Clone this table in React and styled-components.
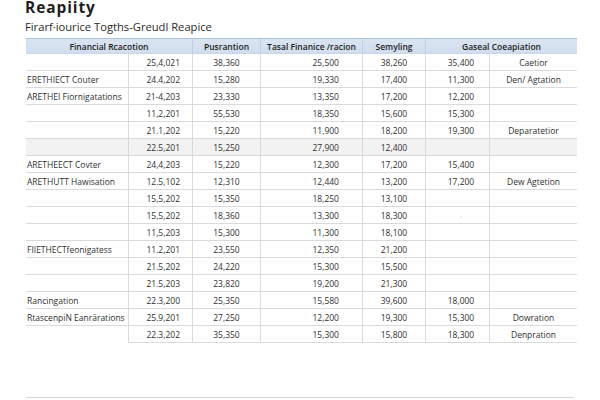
import React from "react";
import styled, { createGlobalStyle } from "styled-components";

const Global = createGlobalStyle`
  html, body { margin: 0; padding: 0; background: #ffffff; }
  body { font-family: "Open Sans", "Noto Sans", sans-serif; color: #2f2f2f; }
`;

const COLS = "102px 64px 68px 102px 63px 64px 88px";

const Page = styled.div`
  width: 600px;
  height: 400px;
  box-sizing: border-box;
  padding-left: 26px;
  overflow: hidden;
`;

const Title = styled.h1`
  margin: 0 0 0 -1px;
  font-size: 15.5px;
  line-height: 14px;
  letter-spacing: 0.9px;
  font-weight: 700;
  color: #1e1e1e;
`;

const Subtitle = styled.h2`
  margin: 6px 0 0 -1px;
  font-size: 11.2px;
  line-height: 14px;
  font-weight: 400;
  color: #2a2a2a;
`;

const Table = styled.div`
  width: 551px;
  margin-top: 4px;
  font-size: 8.5px;
`;

const HeaderRow = styled.div`
  display: grid;
  grid-template-columns: ${COLS};
  height: 16px;
  box-sizing: border-box;
  border-top: 1px solid #aec2dc;
  border-bottom: 1px solid #c9d6e7;
  background: linear-gradient(#d9e4f1, #d0ddee);
`;

const HeadCell = styled.div`
  grid-column: span ${(p) => p.$span || 1};
  display: flex;
  align-items: center;
  justify-content: center;
  font-weight: 600;
  color: #1c1c1c;
  white-space: nowrap;
  border-left: ${(p) => (p.$first ? "none" : "1px solid #bfcfe3")};
`;

const Row = styled.div`
  display: grid;
  grid-template-columns: ${COLS};
  height: 17px;
  background: ${(p) => (p.$shaded ? "#f2f2f2" : "transparent")};
`;

const Cell = styled.div`
  display: flex;
  align-items: center;
  box-sizing: border-box;
  justify-content: ${(p) =>
    p.$align === "right" ? "flex-end" : p.$align === "left" ? "flex-start" : "center"};
  padding-left: ${(p) => p.$pl || 0}px;
  padding-right: ${(p) => p.$pr || 0}px;
  border-bottom: ${(p) => (p.$noBottom ? "1px solid transparent" : "1px solid #dadada")};
  border-left: ${(p) => (p.$first ? "none" : "1px solid #dadada")};
  white-space: nowrap;
  color: #303030;
`;

const Faint = styled.span`
  color: ${(p) => (p.$strong ? "#b0b0b0" : "#dedede")};
  font-size: 8px;
`;

const BottomRule = styled.div`
  width: 548px;
  margin-top: 54px;
  border-top: 1px solid #d6d6d6;
`;

const rows = [
  ["", "25,4,021", "38,360", "25,500", "38,260", "35,400", "Caetior"],
  ["ERETHIECT Couter", "24.4,202", "15,280", "19,330", "17,400", "11,300", "Den/ Agtation"],
  ["ARETHEI Fiornigatations", "21-4,203", "23,330", "13,350", "17,200", "12,200", ""],
  ["", "11,2,201", "55,530", "18,350", "15,600", "15,300", ""],
  ["", "21.1,202", "15,220", "11,900", "18,200", "19,300", "Deparatetior"],
  ["", "22.5,201", "15,250", "27,900", "12,400", "", "", true],
  ["ARETHEECT Covter", "24,4,203", "15,220", "12,300", "17,200", "15,400", ""],
  ["ARETHUTT Hawisation", "12.5,102", "12,310", "12,440", "13,200", "17,200", "Dew Agtetion"],
  ["", "15,5,202", "15,350", "18,250", "13,100", "", ""],
  ["", "15,5,202", "18,360", "13,300", "18,300", "dot", ""],
  ["", "11,5,203", "15,300", "11,300", "18,100", "", ""],
  ["FIIETHECTfeonigatess", "11.2,201", "23,550", "12,350", "21,200", "", ""],
  ["", "21.5,202", "24,220", "15,300", "15,500", "faint", ""],
  ["", "21.5,203", "23,820", "19,200", "21,300", "faint", ""],
  ["Rancingation", "22.3,200", "25,350", "15,580", "39,600", "18,000", ""],
  ["RtascenpiN Eanrärations", "25.9,201", "27,250", "12,200", "19,300", "15,300", "Dowration"],
  ["", "22.3,202", "35,350", "15,300", "15,800", "18,300", "Denpration"],
];

const renderC6 = (v) => {
  if (v === "dot") return <Faint $strong>·</Faint>;
  if (v === "faint") return <Faint>·</Faint>;
  return v;
};

export default function App() {
  return (
    <>
      <Global />
      <Page>
        <Title>Reapiity</Title>
        <Subtitle>Firarf·iourice Togths-Greudl Reapice</Subtitle>
        <Table>
          <HeaderRow>
            <HeadCell $span={2} $first>Financial Rcacotion</HeadCell>
            <HeadCell>Pusrantion</HeadCell>
            <HeadCell>Tasal Finanice /racion</HeadCell>
            <HeadCell>Semyling</HeadCell>
            <HeadCell $span={2}>Gaseal Coeapiation</HeadCell>
          </HeaderRow>
          {rows.map((r, i) => {
            const last = i === rows.length - 1;
            return (
              <Row key={i} $shaded={r[7]}>
                <Cell $first $align="left" $pl={1} $noBottom={last}>{r[0]}</Cell>
                <Cell $align="right" $pr={12}>{r[1]}</Cell>
                <Cell>{r[2]}</Cell>
                <Cell $align="right" $pr={23}>{r[3]}</Cell>
                <Cell>{r[4]}</Cell>
                <Cell $pl={7}>{renderC6(r[5])}</Cell>
                <Cell>{r[6]}</Cell>
              </Row>
            );
          })}
        </Table>
        <BottomRule />
      </Page>
    </>
  );
}
